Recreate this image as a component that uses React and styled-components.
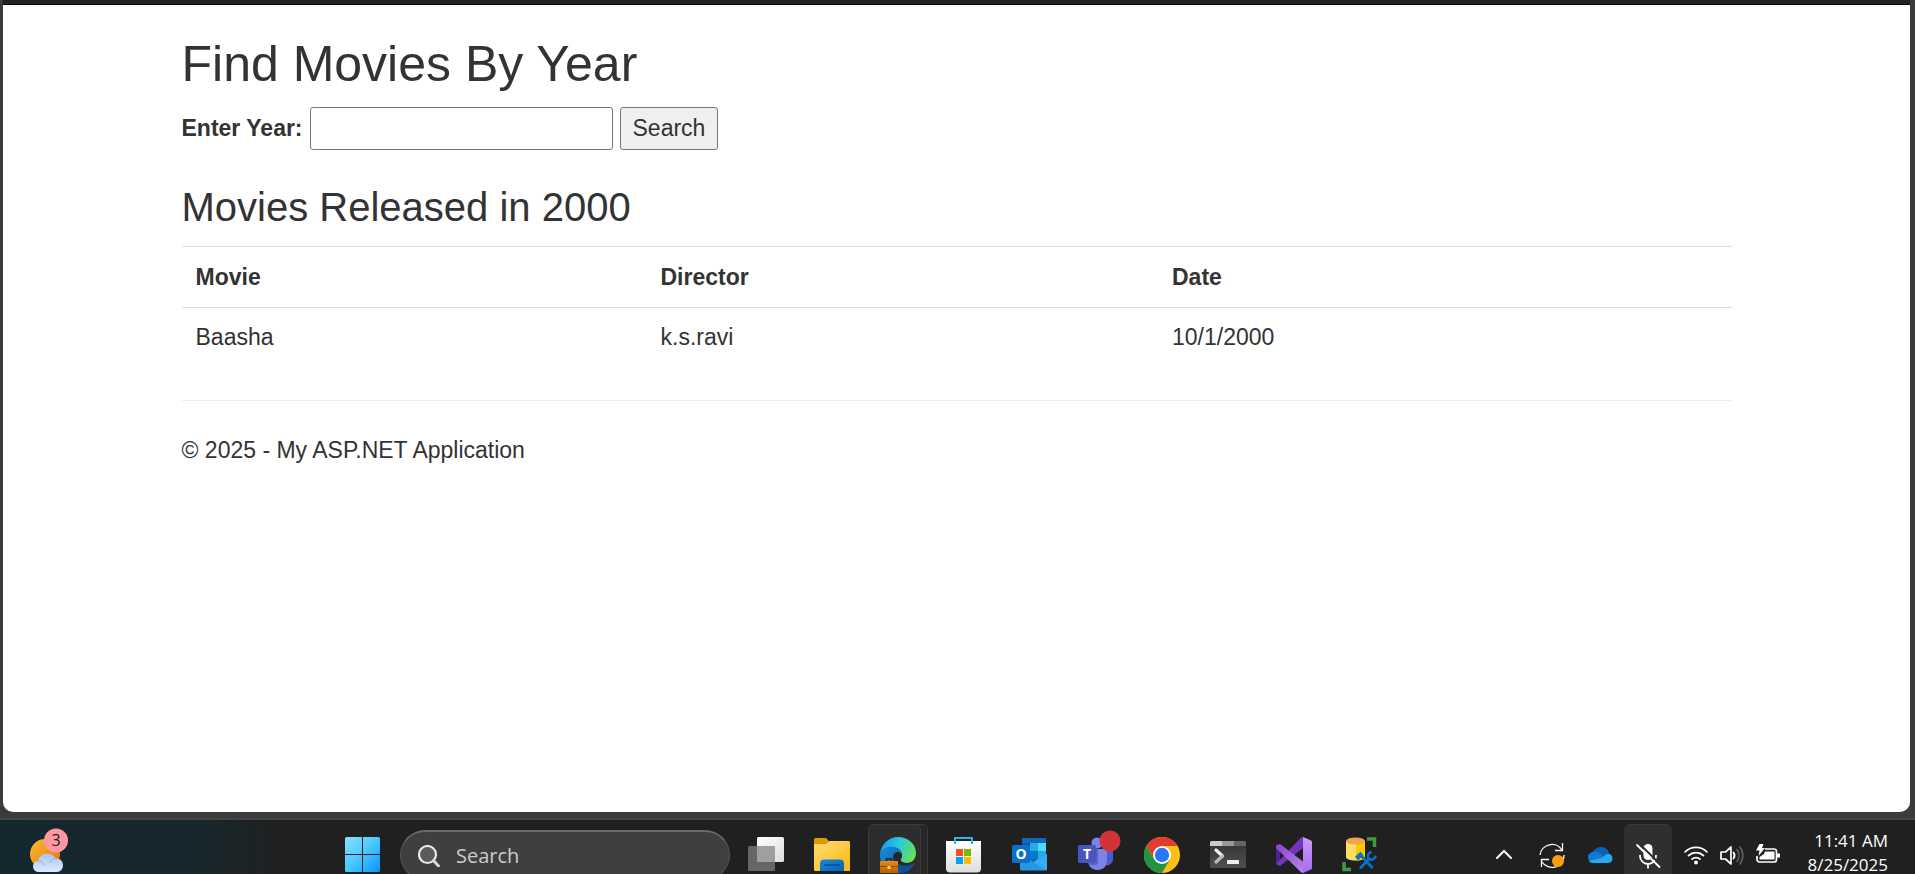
import React from "react";
import styled, { createGlobalStyle, css } from "styled-components";

const GlobalStyle = createGlobalStyle`
  *, *::before, *::after { box-sizing: border-box; }
  body {
    margin: 0;
    background: #3b3b3b;
    color: #333;
    font: 23px/33px "Liberation Sans", Arial, sans-serif;
  }
`;

const Desktop = styled.div`
  display: flex;
  flex-direction: column;
  min-height: 100vh;
`;

const BrowserFrame = styled.div`
  flex: 1;
  display: flex;
  padding: 0 5px 6px 3px;
`;

const Page = styled.div`
  flex: 1;
  background: #fff;
  border-radius: 0 0 10px 10px;
`;

const NavStrip = styled.header`
  height: 5px;
  background: #222;
  border-bottom: 1px solid #080808;
`;

const Container = styled.div`
  width: 82%;
  max-width: 1550px;
  margin: 0 auto;
  padding-top: 32px;
`;

const Title = styled.h1`
  margin: 0 0 15px;
  font-size: 50px;
  line-height: 55px;
  font-weight: 500;
`;

const Subtitle = styled.h2`
  margin: 35px 0 17px;
  font-size: 40px;
  line-height: 44px;
  font-weight: 500;
`;

const SearchForm = styled.form`
  display: flex;
  align-items: center;
  gap: 7px;
`;

const FieldLabel = styled.label`
  font-weight: 700;
`;

const control = css`
  height: 43px;
  border: 1px solid #767676;
  border-radius: 3px;
  color: inherit;
  font: inherit;
`;

const YearInput = styled.input`
  ${control}
  width: 303px;
  padding: 0 4px;
  background: #fff;
`;

const SubmitButton = styled.button`
  ${control}
  padding: 0 12px;
  background: #efefef;
`;

const MovieTable = styled.table`
  width: 100%;
  table-layout: fixed;
  border-spacing: 0;
  border-top: 1px solid #ddd;
`;

const HeadCell = styled.th`
  width: ${(p) => p.$width};
  padding: 14px 14px 13px;
  text-align: left;
`;

const Cell = styled.td`
  padding: 13px 14px;
  border-top: 1px solid #ddd;
`;

const Divider = styled.hr`
  margin: 33px 0;
  border: 0;
  border-top: 1px solid #eee;
`;

const Copyright = styled.p`
  margin: 0;
`;

const Taskbar = styled.nav`
  height: 56px;
  overflow: hidden;
  display: flex;
  align-items: flex-start;
  border-top: 2px solid #454545;
  background: linear-gradient(90deg, #14272d 0, #16282d 180px, #202020 290px);
  background-clip: padding-box;
  color: #fff;
  font-family: "Open Sans", sans-serif;
`;

const Widgets = styled.div`
  flex: 1;
  height: 70px;
  padding-left: 28px;
`;

const Apps = styled.div`
  display: flex;
  align-items: center;
  height: 70px;
`;

const IconButton = styled.button`
  position: relative;
  display: flex;
  align-items: center;
  justify-content: center;
  flex: none;
  width: ${(p) => p.$width || 66}px;
  height: 70px;
  padding: 0;
  border: 0;
  background: none;
  color: inherit;

  svg {
    position: relative;
    display: block;
    overflow: visible;
  }

  ${(p) =>
    p.$active &&
    css`
      &::before,
      &::after {
        content: "";
        position: absolute;
        top: 4px;
        left: 3px;
        width: 60px;
        height: 62px;
        border: 1px solid #3b3b3b;
        border-radius: 6px;
        background: #262626;
      }
      &::after {
        width: 53px;
        background: #2d2d2d;
      }
      svg { z-index: 1; }
    `}

  ${(p) =>
    p.$pressed &&
    css`
      height: 62px;
      border-top: 1px solid #383838;
      border-radius: 6px;
      background: #2f2f2f;
    `}
`;

const TaskSearch = styled.label`
  display: flex;
  align-items: center;
  gap: 16px;
  width: 330px;
  height: 50px;
  margin: 0 3px 0 5px;
  padding: 0 17px;
  border: 1px solid #555;
  border-top: 2px solid #696969;
  border-radius: 25px;
  background: #3f3f3f;

  input {
    flex: 1;
    min-width: 0;
    padding: 0;
    border: 0;
    outline: 0;
    background: none;
    font: 20px/28px "Open Sans", sans-serif;
  }
  input::placeholder { color: #ccc; opacity: 1; }
`;

const Tray = styled.div`
  display: flex;
  align-items: center;
  height: 70px;
  margin-left: 87px;
  padding-right: 27px;
`;

const StatusGroup = styled.div`
  display: flex;
  padding-left: 6px;
`;

const Clock = styled.time`
  width: 102px;
  height: 60px;
  padding-top: 4px;
  text-align: right;
  font-size: 17px;
  line-height: 24px;
  white-space: nowrap;

  span { display: block; }
`;

const Icon = ({ size = 36, children }) => (
  <svg width={size} height={size} viewBox={`0 0 ${size} ${size}`} fill="none" aria-hidden="true">
    {children}
  </svg>
);

const Gradient = ({ id, from, to, ...dir }) => (
  <linearGradient id={id} x1="0" y1="0" x2="1" y2="1" {...dir}>
    <stop stopColor={from} />
    <stop offset="1" stopColor={to} />
  </linearGradient>
);

const WeatherIcon = () => (
  <svg width="42" height="48" viewBox="0 3 42 48" fill="none" aria-hidden="true">
    <defs>
      <Gradient id="sun" from="#f3c12f" to="#ef6c0c" />
      <Gradient id="cloud" from="#a9c5f3" to="#dce9fb" x2="0" />
    </defs>
    <circle cx="17" cy="26" r="15" fill="url(#sun)" />
    <path d="M10 44a5.500 5.500 0 0 1-5-5.500c0-3.500 2.500-5.500 5-5.500 1-4.500 4.500-7.500 9-7.500 4 0 7 2 8.500 5 4.500-.5 7.500 2.500 7.500 6.500 0 4-2.500 7-6 7z" fill="url(#cloud)" />
    <path d="M10 33c3 0 5 1.500 6 4m11.500-6.500c-3 .3-5 2-6 4.500" stroke="#8fb0e8" strokeWidth="1" />
    <circle cx="28" cy="12.500" r="12" fill="#ff98a1" />
    <text x="28" y="18" textAnchor="middle" fontFamily="Open Sans, sans-serif" fontSize="16" fill="#222">3</text>
  </svg>
);

const StartIcon = () => (
  <Icon>
    <defs>
      <linearGradient id="start" gradientUnits="userSpaceOnUse" x1="0" y1="0" x2="35" y2="35">
        <stop stopColor="#8be0ff" />
        <stop offset=".5" stopColor="#48c8ff" />
        <stop offset="1" stopColor="#0894ff" />
      </linearGradient>
    </defs>
    <path transform="translate(1 0)" fill="url(#start)" d="M1.500 0H17v17H0V1.500A1.500 1.500 0 0 1 1.500 0zM18 0h15.500A1.500 1.500 0 0 1 35 1.500V17H18zM0 18h17v17H1.500A1.500 1.500 0 0 1 0 33.500zM18 18h17v15.500a1.500 1.500 0 0 1-1.500 1.500H18z" />
  </Icon>
);

const MagnifierIcon = () => (
  <Icon size={22}>
    <circle cx="9.500" cy="9.500" r="8.500" fill="#5b5b5b" stroke="#e8e8e8" strokeWidth="2.200" />
    <path d="M15.500 15.500l5 5.500" stroke="#d8dde2" strokeWidth="2.800" strokeLinecap="round" />
  </Icon>
);

const TaskViewIcon = () => (
  <Icon>
    <defs><Gradient id="tv" from="#fff" to="#dcdcdc" /></defs>
    <rect x="9" width="27" height="25" rx="1.500" fill="url(#tv)" />
    <rect y="9" width="27" height="25" rx="1.500" fill="#6f6f6f" fillOpacity=".88" />
    <path d="M9 9h18v16H9z" fill="#aaa" fillOpacity=".75" />
  </Icon>
);

const FolderIcon = () => (
  <Icon>
    <defs>
      <Gradient id="folder" from="#ffdc70" to="#fbb712" />
      <Gradient id="folderBlue" from="#1689de" to="#0c63b4" />
    </defs>
    <path d="M0 2.500A1.500 1.500 0 0 1 1.500 1H11c1 0 1.500.4 2 1l2.500 3V12H0z" fill="#dc9a05" />
    <path d="M0 7h12l3.500-3h19A1.500 1.500 0 0 1 36 5.500V34H1.500A1.500 1.500 0 0 1 0 32.500z" fill="url(#folder)" />
    <path d="M6 34v-7.500a4 4 0 0 1 4-4h16a4 4 0 0 1 4 4V34z" fill="url(#folderBlue)" />
    <path d="M11 28h14" stroke="#074e91" strokeWidth="1.700" strokeLinecap="round" />
  </Icon>
);

const EdgeIcon = () => (
  <Icon size={38}>
    <defs>
      <linearGradient id="edgeTop" x1="0" y1=".3" x2="1" y2=".6">
        <stop stopColor="#159ce8" />
        <stop offset=".45" stopColor="#2cc6df" />
        <stop offset="1" stopColor="#63e452" />
      </linearGradient>
      <Gradient id="edgeSide" from="#188fe0" to="#0756a0" />
      <Gradient id="case" from="#e98a13" to="#b85e00" x2="0" />
    </defs>
    <g transform="translate(1 1)">
      <path d="M0 17C1 7 9 0 18 0c10 0 18 7 18 16 0 6-4 10-9.500 10-4 0-6-1.500-6-3 0-1.200 1.500-2 1.500-5 0-4-4-8-10-8C7 10 2 13 0 17z" fill="url(#edgeTop)" />
      <path d="M0 19C0 13 5 9.500 11 9.500c6 0 10.500 3.500 11 8-1.500-2-3.500-3-6-2-2.500 1-3.500 4-2.500 7.500C15 29 20 33 25 35c-2 .7-4.500 1-7 1C8 36 0 29 0 19z" fill="url(#edgeSide)" />
      <path d="M14 21c2 6.500 11 10.500 19.500 5.500.7-.4 1.200.2.700 1C31 32.500 27 35.500 22 36c-5-3-9-9-8-15z" fill="#124f9b" />
      <path d="M20.500 23c0-1.200 1.500-2 1.500-5-1.500-2-3.500-3-6-2-2.500 1-3.500 4-2 7 3 4 8 5.500 14 3-4.500.3-7.500-1.300-7.500-3z" fill="#262626" />
      <path d="M6.500 24v-2h5v2" stroke="#262626" strokeWidth="1.500" />
      <rect y="24" width="18" height="12" rx="1" fill="url(#case)" />
      <path d="M0 29.500h18" stroke="#964900" />
      <rect x="7.500" y="29" width="3" height="3" fill="#ffd45c" />
    </g>
  </Icon>
);

const StoreIcon = () => (
  <Icon>
    <defs><Gradient id="bag" from="#fff" to="#dedede" x2="0" /></defs>
    <path d="M0 4h35v27.500a4 4 0 0 1-4 4H4a4 4 0 0 1-4-4z" fill="url(#bag)" />
    <path d="M9 7V1h17v6" stroke="#2bb4ef" strokeWidth="2" />
    <path d="M10 12h7v7h-7z" fill="#f25022" />
    <path d="M18 12h7v7h-7z" fill="#7fba00" />
    <path d="M10 20h7v7h-7z" fill="#00a4ef" />
    <path d="M18 20h7v7h-7z" fill="#ffb900" />
  </Icon>
);

const OutlookIcon = () => (
  <Icon>
    <path d="M11 1h22a1 1 0 0 1 1 1v22H10V2a1 1 0 0 1 1-1z" fill="#0c6bbd" />
    <path d="M10 6h8v8h-8z" fill="#0a59a5" />
    <path d="M18 6h8v8h-8z" fill="#28a8ea" />
    <path d="M26 6h8v8h-8z" fill="#50d9ff" />
    <path d="M18 14h8v8h-8z" fill="#0078d4" />
    <path d="M26 14h8v8h-8z" fill="#28a8ea" />
    <path d="M35 17v15a1.500 1.500 0 0 1-1.500 1.500h-24A1.500 1.500 0 0 1 8 32V17l13.500 8z" fill="#2197e5" />
    <path d="M35 17v15a1.500 1.500 0 0 1-1 1.300L16 22l5.500 3z" fill="#36abef" />
    <rect y="8" width="18" height="18" rx="1.500" fill="#0a70c9" />
    <text x="9" y="22" textAnchor="middle" fontFamily="Open Sans, sans-serif" fontSize="14" fontWeight="700" fill="#fff">O</text>
  </Icon>
);

const TeamsIcon = () => (
  <Icon>
    <circle cx="19" cy="6" r="5.500" fill="#7b83eb" />
    <path d="M27 14h8v8.500a6 6 0 0 1-8 5.500z" fill="#5059c9" />
    <path d="M10 12h17.500a1.500 1.500 0 0 1 1.500 1.500V24c0 5-4 9-9.500 9S10 29 10 24z" fill="#7b83eb" />
    <path d="M10 12h10v13a3 3 0 0 1-3 3h-6z" fill="#5a61c4" />
    <rect y="8" width="18" height="18" rx="1.500" fill="#4b53bc" />
    <text x="9" y="22" textAnchor="middle" fontFamily="Open Sans, sans-serif" fontSize="14" fontWeight="700" fill="#fff">T</text>
    <circle cx="32" cy="4" r="10.500" fill="#d13438" />
  </Icon>
);

const ChromeIcon = () => (
  <Icon>
    <circle cx="18" cy="18" r="18" fill="#fbc116" />
    <path d="M18 9h15.600A18 18 0 0 0 2.400 9l7.800 13.500z" fill="#e33b2e" />
    <path d="M2.400 9A18 18 0 0 0 18 36l7.800-13.500H10.200z" fill="#229342" />
    <circle cx="18" cy="18" r="9" fill="#fff" />
    <circle cx="18" cy="18" r="7.200" fill="#2979f2" />
  </Icon>
);

const TerminalIcon = () => (
  <Icon>
    <defs><Gradient id="term" from="#333" to="#505050" x2="0" /></defs>
    <rect y="4" width="36" height="27" rx="1.500" fill="url(#term)" />
    <path d="M1.500 4H12v5H0V5.500A1.500 1.500 0 0 1 1.500 4z" fill="#ccc" />
    <path d="M12 4h12v5H12z" fill="#999" />
    <path d="M24 4h10.500A1.500 1.500 0 0 1 36 5.500V9H24z" fill="#666" />
    <path d="M6 13l6.500 6" stroke="#eee" strokeWidth="3.200" strokeLinecap="round" />
    <path d="M12.500 19L6 25" stroke="#bbb" strokeWidth="3.200" strokeLinecap="round" />
    <rect x="17" y="23" width="12" height="4" rx=".5" fill="#eee" />
  </Icon>
);

const VisualStudioIcon = () => (
  <Icon>
    <defs>
      <Gradient id="vs" from="#cb9cf8" to="#a66bee" x2="0" />
      <Gradient id="vsBand" from="#8747c8" to="#b784ee" />
    </defs>
    <path d="M0 8.500L4 7v22l-4-2z" fill="#52218f" />
    <path d="M4 29l-4-2L25 .5 27 0v11z" fill="#7435be" />
    <path d="M0 8.500L4 7l23 17.500V36l-2-.8L0 11z" fill="url(#vsBand)" />
    <path d="M27 0l8 3.500a2 2 0 0 1 1 1.500v26a2 2 0 0 1-1 1.500L27 36z" fill="url(#vs)" />
  </Icon>
);

const SqlStudioIcon = () => (
  <Icon>
    <path d="M25 2h7.500v8M9 32.500H2V25" stroke="#3f9b43" strokeWidth="3.500" />
    <path d="M4 4h19v16c0 2-4 3.500-9.500 3.500S4 22 4 20z" fill="#ffdd65" />
    <path d="M14 4h9v16c0 2-4 3.500-9 3.500z" fill="#fac800" />
    <ellipse cx="13.500" cy="4" rx="9.500" ry="3.500" fill="#efa550" />
    <path d="M18.500 18L30.500 31" stroke="#0871c6" strokeWidth="2.800" />
    <path d="M14.500 21.500l5.500-5" stroke="#0871c6" strokeWidth="4.500" />
    <path d="M18 31.500L27.500 21.500" stroke="#0871c6" strokeWidth="2.800" />
    <path d="M29.500 15c-2.500.5-4 2.500-3.500 5 .5 2 2.500 3 4.500 2.500 1.800-.5 3-2 3-4" stroke="#0871c6" strokeWidth="2.600" />
  </Icon>
);

const ChevronIcon = () => (
  <Icon size={24}>
    <path d="M5 15l7-7 7 7" stroke="#fff" strokeWidth="2" strokeLinecap="round" />
  </Icon>
);

const SyncIcon = () => (
  <Icon size={26}>
    <path d="M1 13A12 12 0 0 1 23 8M23.500 1v7.500H16M25 13a12 12 0 0 1-22 7M2.500 25v-7.500H10" stroke="#fff" strokeWidth="1.300" />
    <circle cx="19" cy="19" r="6" fill="#ff9d0a" />
  </Icon>
);

const OneDriveIcon = () => (
  <Icon size={26}>
    <path d="M4 18C4 10 8 5 14 5c4 0 7 2.500 8 6l-7 9z" fill="#0960b4" />
    <path d="M7 10c3-.5 5 .5 7 2l6 8H6c-3.500 0-5-2-5-5 0-3 2.500-5 6-5z" fill="#0f79d4" />
    <path d="M14 16l6-4c3-1 5.500 1.500 5.500 4.500 0 3-2 4.500-5 4.500H6c-2 0-3.500-1-4-2z" fill="#29a8f0" />
  </Icon>
);

const MicOffIcon = () => (
  <Icon size={26}>
    <rect x="8.500" y="1" width="9" height="16" rx="4.500" fill="#fff" />
    <path d="M5 12v1a8 8 0 0 0 16 0v-1M13 21v4.500" stroke="#fff" strokeWidth="1.800" />
    <path d="M3.500 0L27 23" stroke="#2f2f2f" strokeWidth="2" />
    <path d="M1.500 1.500l23.500 23" stroke="#fff" strokeWidth="1.800" />
  </Icon>
);

const WifiIcon = () => (
  <Icon size={24}>
    <path d="M1 9a15.500 15.500 0 0 1 22 0M4.500 12.700a10.600 10.600 0 0 1 15 0M8 16.200a5.700 5.700 0 0 1 8 0" stroke="#fff" strokeWidth="1.700" strokeLinecap="round" />
    <circle cx="12" cy="19.500" r="2" fill="#fff" />
  </Icon>
);

const SpeakerIcon = () => (
  <Icon size={24}>
    <path d="M1 9h4.500L11 4v17l-5.500-5H1z" stroke="#fff" strokeWidth="1.700" strokeLinejoin="round" />
    <path d="M13.500 9.500a5 5 0 0 1 0 6" stroke="#fff" strokeWidth="1.700" strokeLinecap="round" />
    <path d="M17 6.500a10 10 0 0 1 0 12M20 4a14 14 0 0 1 0 17" stroke="#666" strokeWidth="1.500" strokeLinecap="round" />
  </Icon>
);

const BatteryIcon = () => (
  <Icon size={24}>
    <path d="M9 6h9a2.500 2.500 0 0 1 2.500 2.500v8A2.500 2.500 0 0 1 18 19H3.500A2.500 2.500 0 0 1 1 16.500V13" stroke="#fff" strokeWidth="1.700" />
    <path d="M9 8.500h9.500v8h-15V14L8 11zM21 10.500h3v4h-3z" fill="#fff" />
    <path d="M3.500 1h4L6 5h3L2.500 13l1-5.500H0z" fill="#fff" />
  </Icon>
);

const apps = [
  ["Task View", TaskViewIcon],
  ["File Explorer", FolderIcon],
  ["Microsoft Edge", EdgeIcon],
  ["Microsoft Store", StoreIcon],
  ["Outlook", OutlookIcon],
  ["Teams", TeamsIcon],
  ["Google Chrome", ChromeIcon],
  ["Terminal", TerminalIcon],
  ["Visual Studio", VisualStudioIcon],
  ["SQL Server Management Studio", SqlStudioIcon],
];

const trayItems = [
  ["Show hidden icons", ChevronIcon],
  ["Windows Update", SyncIcon],
  ["OneDrive", OneDriveIcon],
  ["Microphone", MicOffIcon],
];

const statusItems = [
  ["Network", WifiIcon],
  ["Volume", SpeakerIcon],
  ["Battery", BatteryIcon],
];

const columns = [
  ["Movie", "30%"],
  ["Director", "33%"],
  ["Date", "37%"],
];

const movies = [["Baasha", "k.s.ravi", "10/1/2000"]];

export default function App() {
  return (
    <Desktop>
      <GlobalStyle />
      <BrowserFrame>
        <Page>
          <NavStrip />
          <Container as="main">
            <Title>Find Movies By Year</Title>
            <SearchForm onSubmit={(e) => e.preventDefault()}>
              <FieldLabel htmlFor="year">Enter Year:</FieldLabel>
              <YearInput id="year" name="year" type="text" />
              <SubmitButton type="submit">Search</SubmitButton>
            </SearchForm>
            <Subtitle>Movies Released in 2000</Subtitle>
            <MovieTable>
              <thead>
                <tr>
                  {columns.map(([name, width]) => (
                    <HeadCell key={name} scope="col" $width={width}>{name}</HeadCell>
                  ))}
                </tr>
              </thead>
              <tbody>
                {movies.map((movie) => (
                  <tr key={movie[0]}>
                    {movie.map((value) => <Cell key={value}>{value}</Cell>)}
                  </tr>
                ))}
              </tbody>
            </MovieTable>
            <Divider />
            <footer>
              <Copyright>© 2025 - My ASP.NET Application</Copyright>
            </footer>
          </Container>
        </Page>
      </BrowserFrame>

      <Taskbar aria-label="Taskbar">
        <Widgets>
          <IconButton $width={42} aria-label="Weather, 3 notifications"><WeatherIcon /></IconButton>
        </Widgets>
        <Apps>
          <IconButton aria-label="Start"><StartIcon /></IconButton>
          <TaskSearch>
            <MagnifierIcon />
            <input type="search" placeholder="Search" aria-label="Search" />
          </TaskSearch>
          {apps.map(([name, AppIcon]) => (
            <IconButton key={name} aria-label={name} $active={name === "Microsoft Edge"}>
              <AppIcon />
            </IconButton>
          ))}
        </Apps>
        <Tray>
          {trayItems.map(([name, TrayIcon]) => (
            <IconButton key={name} aria-label={name} $width={48} $pressed={name === "Microphone"}>
              <TrayIcon />
            </IconButton>
          ))}
          <StatusGroup>
            {statusItems.map(([name, StatusIcon]) => (
              <IconButton key={name} aria-label={name} $width={36}><StatusIcon /></IconButton>
            ))}
          </StatusGroup>
          <Clock dateTime="2025-08-25T11:41">
            <span>11:41 AM</span>
            <span>8/25/2025</span>
          </Clock>
        </Tray>
      </Taskbar>
    </Desktop>
  );
}
